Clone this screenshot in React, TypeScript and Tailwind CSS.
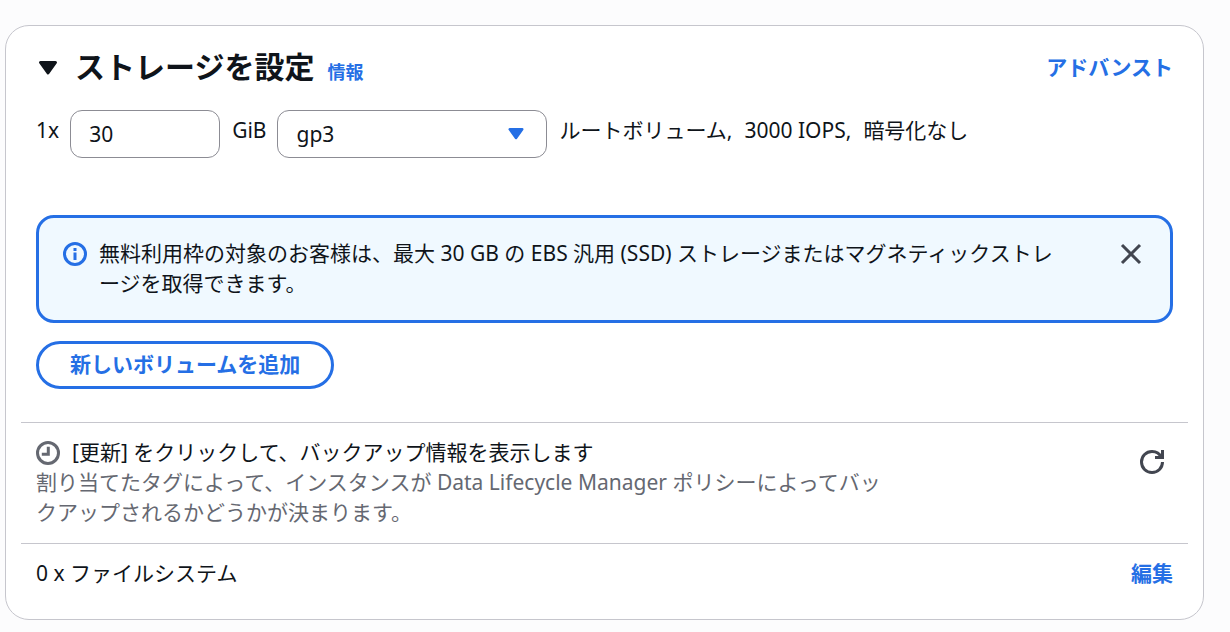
import { useState } from 'react';

export default function App() {
  const [size, setSize] = useState('30');
  const [volumeType, setVolumeType] = useState('gp3');
  const [open, setOpen] = useState(true);
  const [showNotice, setShowNotice] = useState(true);

  return (
    <main
      lang="ja"
      className="min-h-screen bg-[#fcfcfd] pt-[25px] pr-[26px] pb-3 pl-[5px] font-['Noto_Sans','Noto_Sans_CJK_JP',sans-serif] text-[21px] leading-[30px] text-[#0f141a]"
    >
      <section className="rounded-3xl border border-[#c6c6cd] bg-white px-[15px] pt-5 pb-[31px]">
        <header className="flex items-center justify-between px-[15px]">
          <div className="flex items-baseline gap-[13px]">
            <h2 className="text-[30px] leading-[42px] font-bold">
              <button
                type="button"
                aria-expanded={open}
                onClick={() => setOpen(!open)}
                className="flex items-center gap-[15px]"
              >
                <CaretDown className="size-6 text-[#0f141a]" />
                ストレージを設定
              </button>
            </h2>
            <a href="#info" className="text-[18px] font-bold text-[#256fe5]">
              情報
            </a>
          </div>
          <a href="#advanced" className="font-bold text-[#256fe5]">
            アドバンスト
          </a>
        </header>

        {open && (
          <div className="px-[15px] pt-[22px] pb-[33px]">
            <div className="flex items-start">
              <label htmlFor="volume-size" className="mr-[11px] pt-[5px]">
                1x
              </label>
              <input
                id="volume-size"
                type="text"
                inputMode="numeric"
                value={size}
                onChange={(e) => setSize(e.target.value)}
                className="h-12 w-[150px] rounded-xl border border-[#8c8c94] bg-white px-[18px]"
              />
              <label htmlFor="volume-type" className="mr-[11px] ml-3 pt-[5px]">
                GiB
              </label>
              <div className="relative">
                <select
                  id="volume-type"
                  value={volumeType}
                  onChange={(e) => setVolumeType(e.target.value)}
                  className="h-12 w-[270px] appearance-none rounded-xl border border-[#8c8c94] bg-white px-[18px]"
                >
                  <option>gp3</option>
                  <option>gp2</option>
                  <option>io1</option>
                  <option>io2</option>
                </select>
                <CaretDown className="pointer-events-none absolute top-[13px] right-[21px] size-5 text-[#256fe5]" />
              </div>
              <p className="ml-3 flex gap-3 pt-[5px]">
                <span>ルートボリューム,</span>
                <span>3000 IOPS,</span>
                <span>暗号化なし</span>
              </p>
            </div>

            {showNotice && (
              <div className="mt-[57px] flex items-start rounded-[18px] border-[3px] border-[#256fe5] bg-[#f0f9ff] px-6 pt-5 pb-[22px]">
                <InfoIcon />
                <p className="mr-[51px] ml-3 flex-1 [line-break:loose]">
                  無料利用枠の対象のお客様は、最大 30 GB の EBS 汎用 (SSD) ストレージまたはマグネティックストレージを取得できます。
                </p>
                <button
                  type="button"
                  aria-label="閉じる"
                  onClick={() => setShowNotice(false)}
                  className="mt-1 mr-[3px] text-[#424650]"
                >
                  <CloseIcon />
                </button>
              </div>
            )}

            <button
              type="button"
              className="mt-[18px] h-12 rounded-full border-[3px] border-[#256fe5] px-[31px] pb-0.5 font-bold text-[#256fe5]"
            >
              新しいボリュームを追加
            </button>
          </div>
        )}

        <div className="flex items-start justify-between border-t border-[#c6c6cd] px-[15px] pt-[14px] pb-4">
          <div className="max-w-[850px]">
            <div className="flex items-center gap-3">
              <ClockIcon />
              <span>[更新] をクリックして、バックアップ情報を表示します</span>
            </div>
            <p className="text-[#656871] [line-break:loose]">
              割り当てたタグによって、インスタンスが Data Lifecycle Manager ポリシーによってバックアップされるかどうかが決まります。
            </p>
          </div>
          <button type="button" aria-label="更新" className="mt-[13px] mr-[9px] text-[#424650]">
            <RefreshIcon />
          </button>
        </div>

        <div className="flex items-center justify-between border-t border-[#c6c6cd] px-[15px] pt-[14px]">
          <span>0 x ファイルシステム</span>
          <a href="#edit" className="font-bold text-[#256fe5]">
            編集
          </a>
        </div>
      </section>
    </main>
  );
}

function CaretDown({ className }: { className: string }) {
  return (
    <svg className={className} viewBox="0 0 16 16" fill="currentColor" stroke="currentColor">
      <path strokeWidth={2} strokeLinejoin="round" d="M3 5h10l-5 7z" />
    </svg>
  );
}

function InfoIcon() {
  return (
    <svg
      className="mt-1 size-6 shrink-0 text-[#256fe5]"
      viewBox="0 0 24 24"
      fill="none"
      stroke="currentColor"
      strokeWidth={3}
    >
      <circle cx="12" cy="12" r="10.5" />
      <path d="M12 6v3M12 10.5V18" />
    </svg>
  );
}

function ClockIcon() {
  return (
    <svg
      className="mt-0.5 size-6 shrink-0 text-[#656871]"
      viewBox="0 0 24 24"
      fill="none"
      stroke="currentColor"
      strokeWidth={3}
    >
      <circle cx="12" cy="12" r="10.5" />
      <path d="M12.3 5.8v7.4H5.8" />
    </svg>
  );
}

function CloseIcon() {
  return (
    <svg className="size-6" viewBox="0 0 24 24" fill="none" stroke="currentColor" strokeWidth={3}>
      <path d="M3 3l18 18M21 3L3 21" />
    </svg>
  );
}

function RefreshIcon() {
  return (
    <svg
      className="size-6 overflow-visible"
      viewBox="0 0 16 16"
      fill="none"
      stroke="currentColor"
      strokeWidth={2}
    >
      <path d="M10 5h5V0" />
      <path d="M15 8a6.957 6.957 0 0 1-7 7 6.957 6.957 0 0 1-7-7 6.957 6.957 0 0 1 7-7 6.87 6.87 0 0 1 6.3 4" />
    </svg>
  );
}
